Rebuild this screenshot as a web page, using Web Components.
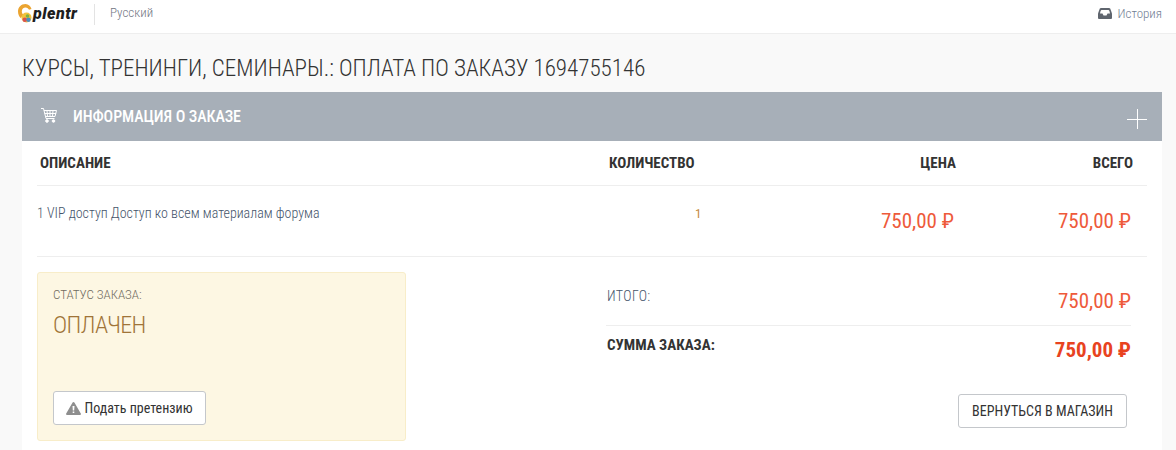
<!DOCTYPE html>
<html lang="ru">
<head>
<meta charset="utf-8">
<title>Оплата по заказу</title>
<style>
  html, body { margin: 0; padding: 0; }
  body {
    background: #f9f9f9;
    font-family: Roboto, "Liberation Sans", sans-serif;
    font-stretch: condensed;
    color: #333;
    height: 450px;
    overflow: hidden;
  }
</style>
</head>
<body>
<top-bar></top-bar>
<order-page>
  <order-panel></order-panel>
</order-page>

<script>
const NARROW = `font-family: Roboto, "Liberation Sans", sans-serif;`;

class TopBar extends HTMLElement {
  constructor() {
    super();
    this.attachShadow({mode: 'open'}).innerHTML = `
      <style>
        :host {
          display: flex; align-items: center; height: 33px; background: #fff;
          border-bottom: 1px solid #eee; padding: 0 14px 0 17px; ${NARROW}
        }
        .logo { display: flex; align-items: center; width: 77px; margin-top: -5px; }
        .logo b { font: italic 900 16px/1 Roboto, sans-serif; font-stretch: normal; color: #1e1e1e; margin: -1px 0 0 0; letter-spacing: .5px; }
        .lang { border-left: 1px solid #e3e3e3; height: 21px; line-height: 17px; margin-top: -4px; padding-left: 15px; font-size: 13px; font-weight: 300; color: #70757f; }
        .history { margin-left: auto; margin-top: -7px; display: flex; align-items: center; gap: 6px; font-size: 13px; font-weight: 300; color: #6f7c92; }
      </style>
      <div class="logo">
        <svg width="16" height="20" viewBox="0 0 16 20">
          <path d="M8.500 0C4 0 1 3.300 1 7.500c0 3 1.200 5 2.500 6.500l3-3C5.300 9.800 4.800 8.700 4.800 7.300c0-2.200 1.700-3.800 3.700-3.800 1.700 0 3 1 3.500 2.300l2.500-.8C13.700 2.200 11.500 0 8.500 0z" fill="#eba431"/>
          <circle cx="9.500" cy="13.500" r="5" fill="#f2c23e"/>
          <circle cx="7.800" cy="15.800" r="2.300" fill="#d9534f"/>
          <circle cx="11.500" cy="15.800" r="2.200" fill="#4a90c2"/>
          <circle cx="10.500" cy="12" r="1.800" fill="#7cb342"/>
        </svg>
        <b>plentr</b>
      </div>
      <div class="lang">Русский</div>
      <div class="history">
        <svg width="14" height="11" viewBox="0 0 14 11">
          <path d="M3 0h8c.6 0 1 .3 1.300.8L14 5.500V10a1 1 0 0 1-1 1H1a1 1 0 0 1-1-1V5.500L1.700.8C2 .3 2.400 0 3 0z" fill="#5f656e"/>
          <path d="M3.500 2h7c.5 0 1 .8 1.500 3.500H9.500L8.500 7.500h-3L4.500 5.500H2C2.500 2.800 3 2 3.500 2z" fill="#fff"/>
        </svg>
        <span>История</span>
      </div>`;
  }
}

class OrderPage extends HTMLElement {
  constructor() {
    super();
    this.attachShadow({mode: 'open'}).innerHTML = `
      <style>
        :host { display: block; padding: 0 14px 0 22px; ${NARROW} }
        h1 { margin: 0; padding: 21px 0 10px; font-size: 23px; line-height: 27px; font-weight: 300; color: #333; white-space: nowrap; }
      </style>
      <h1>КУРСЫ, ТРЕНИНГИ, СЕМИНАРЫ.: ОПЛАТА ПО ЗАКАЗУ 1694755146</h1>
      <slot></slot>`;
  }
}

class PriceTag extends HTMLElement {
  constructor() {
    super();
    this.attachShadow({mode: 'open'}).innerHTML = `
      <style>
        :host { display: block; text-align: right; color: #ee5a3a; font-size: 21px; line-height: 24px; font-weight: 400; white-space: nowrap; }
        :host([strong]) { font-weight: 700; color: #e8431f; }
      </style>
      <slot></slot>`;
  }
}

class OrderPanel extends HTMLElement {
  constructor() {
    super();
    this.attachShadow({mode: 'open'}).innerHTML = `
      <style>
        :host { display: block; background: #fff; height: 358px; }
        .bar {
          display: flex; align-items: center; height: 49px; background: #a7afb8; color: #fff;
          padding: 0 15px 0 19px; font-size: 16px; font-weight: 500;
        }
        .bar span { margin-left: 16px; margin-top: -1px; letter-spacing: -.1px; }
        .bar svg:first-child { margin-top: -3px; }
        .bar svg:last-child { margin-left: auto; margin-top: 5px; }
        .body { padding: 0 31px 0 15px; }
        .row { display: grid; grid-template-columns: 569px 115px 1fr 177px; margin-right: -16px; }
        .head { height: 44px; align-items: center; border-bottom: 1px solid #eee; font-size: 15px; font-weight: 700; color: #333; padding-left: 3px; }
        .head > :nth-child(3), .head > :nth-child(4) { text-align: right; padding-right: 14px; }
        .item { height: 70px; border-bottom: 1px solid #eee; font-size: 14px; font-weight: 300; color: #44546a; padding-right: 16px; grid-template-columns: 572px 112px 1fr 177px; }
        .item .name { padding: 19px 0 0 0; line-height: 16px; }
        .item .qty { padding: 14px 0 0 86px; line-height: 28px; color: #c58a3f; font-size: 13px; font-weight: 400; }
        .item price-tag { padding-top: 23px; }
        .bottom { display: flex; justify-content: space-between; padding-top: 15px; }
        .status {
          box-sizing: border-box; width: 369px; height: 169px; background: #fdf7e3;
          border: 1px solid #f8edc9; border-radius: 3px; padding: 14px 15px 15px;
          display: flex; flex-direction: column; align-items: flex-start;
        }
        .status small { font-size: 13px; font-weight: 300; line-height: 16px; color: #6f6a5e; }
        .status strong { font-size: 24px; letter-spacing: -.6px; font-weight: 300; line-height: 30px; color: #a07438; margin-top: 7px; }
        .btn {
          box-sizing: border-box; display: flex; align-items: center; justify-content: center; gap: 3px;
          background: #fff; border: 1px solid #c4c7cb; border-radius: 3px; color: #333; font-size: 14px;
        }
        .status .btn { margin-top: auto; width: 153px; height: 34px; }
        .totals { width: 525px; }
        .line { display: flex; justify-content: space-between; }
        .line.sub { height: 53px; align-items: center; border-bottom: 1px solid #eee; color: #44546a; font-size: 14px; font-weight: 300; }
        .line.sub > span { margin: -6px 0 0 1px; letter-spacing: .4px; }
        .line.sub price-tag { margin-top: 5px; }
        .line.sum { height: 50px; align-items: center; font-size: 15px; font-weight: 700; color: #333; }
        .line.sum > span { margin: -12px 0 0 1px; }
        .line.sum price-tag { margin-top: -2px; }
        .back { margin: 18px 4px 0 auto; width: 169px; height: 34px; }
      </style>
      <div class="bar">
        <svg width="16" height="15" viewBox="0 0 16 15" fill="none" stroke="#fff" stroke-width="1">
          <path d="M0 .5h2.500L5 10.500h8.500"/>
          <path d="M3 2.500h12.500l-1.500 6H4.500M6 2.500l.5 6M9 2.500v6M12 2.500l-.5 6M3.600 5.500h11.500"/>
          <circle cx="6" cy="13" r="1.300" fill="#fff"/><circle cx="12.500" cy="13" r="1.300" fill="#fff"/>
        </svg>
        <span>ИНФОРМАЦИЯ О ЗАКАЗЕ</span>
        <svg width="20" height="20" viewBox="0 0 20 20" stroke="#fff" stroke-width="1"><path d="M0 10.500h20M10.500 0v20"/></svg>
      </div>
      <div class="body">
        <div class="row head"><div>ОПИСАНИЕ</div><div>КОЛИЧЕСТВО</div><div>ЦЕНА</div><div>ВСЕГО</div></div>
        <div class="row item">
          <div class="name">1 VIP доступ Доступ ко всем материалам форума</div>
          <div class="qty">1</div>
          <price-tag>750,00 ₽</price-tag>
          <price-tag>750,00 ₽</price-tag>
        </div>
        <div class="bottom">
          <div class="status">
            <small>СТАТУС ЗАКАЗА:</small>
            <strong>ОПЛАЧЕН</strong>
            <div class="btn">
              <svg width="15" height="13" viewBox="0 0 15 13"><path d="M6.600.6a1 1 0 0 1 1.800 0l6.400 11a.9.9 0 0 1-.8 1.400H1a.9.9 0 0 1-.8-1.400z" fill="#8e8e8e"/><path d="M6.500 4h2l-.3 4.500H6.800zM6.700 9.500h1.600V11H6.700z" fill="#fff"/></svg>
              Подать претензию
            </div>
          </div>
          <div class="totals">
            <div class="line sub"><span>ИТОГО:</span><price-tag>750,00 ₽</price-tag></div>
            <div class="line sum"><span>СУММА ЗАКАЗА:</span><price-tag strong>750,00 ₽</price-tag></div>
            <div class="btn back">ВЕРНУТЬСЯ В МАГАЗИН</div>
          </div>
        </div>
      </div>`;
  }
}

customElements.define('top-bar', TopBar);
customElements.define('order-page', OrderPage);
customElements.define('price-tag', PriceTag);
customElements.define('order-panel', OrderPanel);
</script>
</body>
</html>
